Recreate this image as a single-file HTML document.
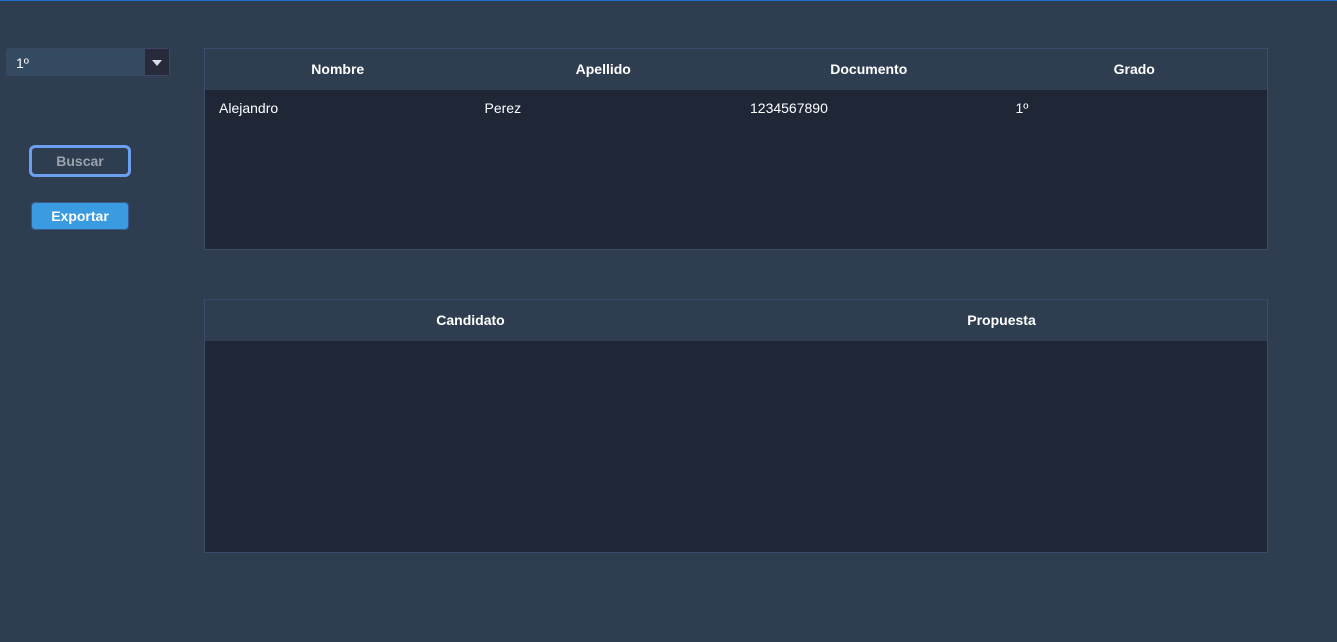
<!DOCTYPE html>
<html><head><meta charset="utf-8"><style>
*{margin:0;padding:0;box-sizing:border-box}
body{width:1337px;height:642px;background:#2e3d50;font-family:"Liberation Sans",sans-serif;position:relative;overflow:hidden}
.top{position:absolute;left:0;top:0;width:1337px;height:1px;background:#1e6fd0}
.abs{position:absolute}
.combo{left:6px;top:48px;width:164px;height:28px;background:#344a60;border:1px solid #3c4766;border-radius:3px;color:#fff;font-size:14px;padding:6px 0 0 9px}
.combo .btn{position:absolute;right:0;top:0;width:24px;height:26px;background:#262a3a}
.combo .btn:after{content:"";position:absolute;left:7px;top:11px;border-left:5px solid transparent;border-right:5px solid transparent;border-top:6px solid #dde}
.b1{left:29px;top:145px;width:102px;height:32px;border:3px solid #6e9ef0;border-radius:6px;color:#9aa3ad;font-weight:bold;font-size:14px;text-align:center;line-height:26px}
.b2{left:31px;top:202px;width:98px;height:28px;background:#3a9be0;border:1px solid #3a5a90;border-radius:4px;color:#fff;font-weight:bold;font-size:14px;text-align:center;line-height:26px}
.tbl{left:204px;width:1064px;background:#1f2737;border:1px solid #3e4a6e}
.hd{height:41px;background:#2e3d50;display:flex;color:#fff;font-weight:bold;font-size:14px}
.hd div{flex:1;text-align:center;line-height:41px}
.row{display:flex;color:#fff;font-size:14px;height:38px;line-height:36px}
.row div{flex:1;padding-left:14px}
</style></head><body>
<div class="top"></div>
<div class="abs combo">1º<div class="btn"></div></div>
<div class="abs b1">Buscar</div>
<div class="abs b2">Exportar</div>
<div class="abs tbl" style="top:48px;height:202px">
<div class="hd"><div>Nombre</div><div>Apellido</div><div>Documento</div><div>Grado</div></div>
<div class="row"><div>Alejandro</div><div>Perez</div><div>1234567890</div><div>1º</div></div>
</div>
<div class="abs tbl" style="top:299px;height:254px">
<div class="hd"><div>Candidato</div><div>Propuesta</div></div>
</div>
</body></html>
